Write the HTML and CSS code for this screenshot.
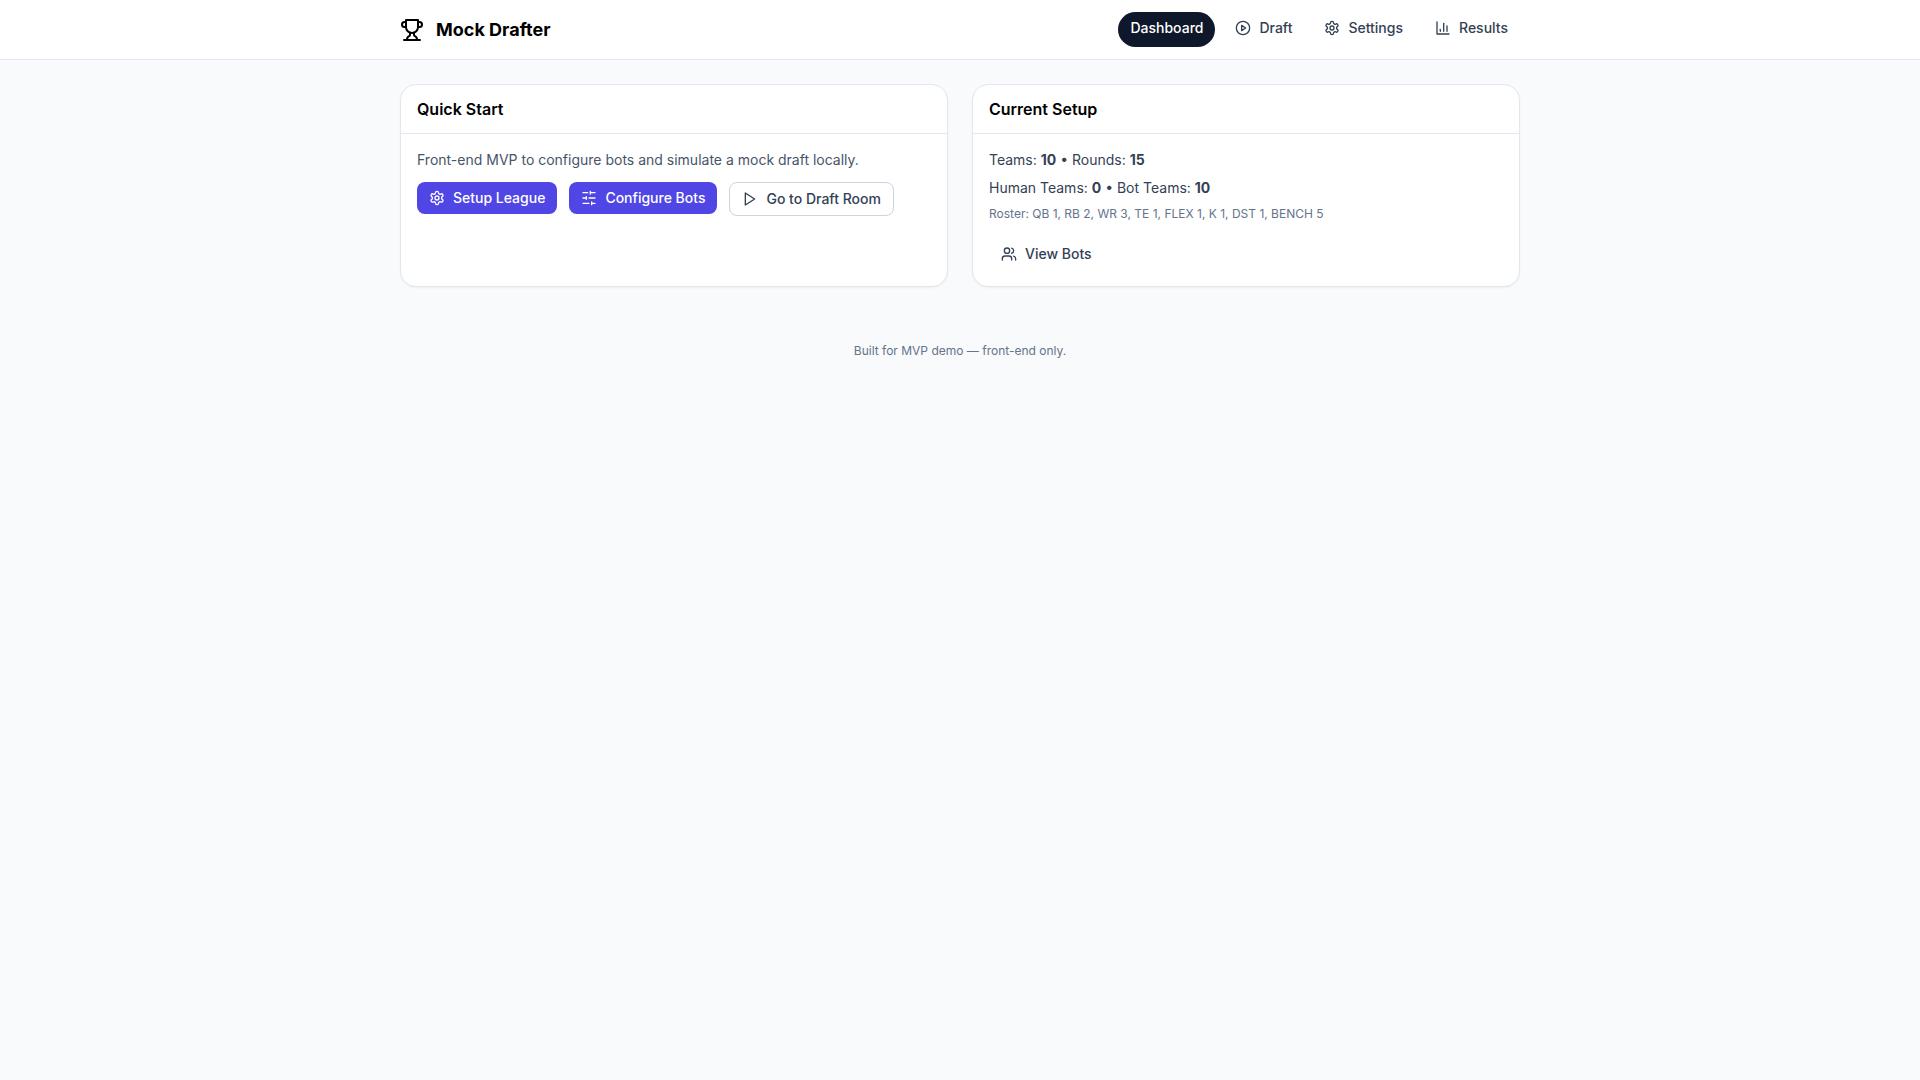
FILE: index.html
```html
<!DOCTYPE html>
<html lang="en">
<head>
<meta charset="utf-8">
<meta name="viewport" content="width=device-width, initial-scale=1">
<title>Mock Drafter</title>
<link rel="stylesheet" href="styles.css">
</head>
<body>
<svg class="sprite" aria-hidden="true">
  <symbol id="settings" viewBox="0 0 24 24">
    <path d="M12.22 2h-.44a2 2 0 0 0-2 2v.18a2 2 0 0 1-1 1.73l-.43.25a2 2 0 0 1-2 0l-.15-.08a2 2 0 0 0-2.73.73l-.22.38a2 2 0 0 0 .73 2.73l.15.1a2 2 0 0 1 1 1.72v.51a2 2 0 0 1-1 1.74l-.15.09a2 2 0 0 0-.73 2.73l.22.38a2 2 0 0 0 2.73.73l.15-.08a2 2 0 0 1 2 0l.43.25a2 2 0 0 1 1 1.73V20a2 2 0 0 0 2 2h.44a2 2 0 0 0 2-2v-.18a2 2 0 0 1 1-1.73l.43-.25a2 2 0 0 1 2 0l.15.08a2 2 0 0 0 2.73-.73l.22-.39a2 2 0 0 0-.73-2.73l-.15-.08a2 2 0 0 1-1-1.74v-.5a2 2 0 0 1 1-1.74l.15-.09a2 2 0 0 0 .73-2.73l-.22-.38a2 2 0 0 0-2.73-.73l-.15.08a2 2 0 0 1-2 0l-.43-.25a2 2 0 0 1-1-1.73V4a2 2 0 0 0-2-2z"/>
    <circle cx="12" cy="12" r="3"/>
  </symbol>
</svg>
<header class="topbar">
  <div class="container topbar-row">
    <div class="brand">
      <svg class="icon icon-lg" viewBox="0 0 24 24" aria-hidden="true"><path d="M6 9H4.5a2.500 2.500 0 0 1 0-5H6"/><path d="M18 9h1.500a2.500 2.500 0 0 0 0-5H18"/><path d="M4 22h16"/><path d="M10 14.660V17c0 .55-.47.98-.97 1.210C7.850 18.750 7 20.240 7 22"/><path d="M14 14.660V17c0 .55.47.98.97 1.210C16.150 18.750 17 20.240 17 22"/><path d="M18 2H6v7a6 6 0 0 0 12 0V2Z"/></svg>
      <span class="brand-name">Mock Drafter</span>
    </div>
    <nav class="nav" aria-label="Main">
      <a class="nav-link active" href="#dashboard" aria-current="page">Dashboard</a>
      <a class="nav-link" href="#draft"><svg class="icon" viewBox="0 0 24 24" aria-hidden="true"><circle cx="12" cy="12" r="10"/><polygon points="10 8 16 12 10 16 10 8"/></svg>Draft</a>
      <a class="nav-link" href="#settings"><svg class="icon" aria-hidden="true"><use href="#settings"/></svg>Settings</a>
      <a class="nav-link" href="#results"><svg class="icon" viewBox="0 0 24 24" aria-hidden="true"><path d="M3 3v18h18"/><path d="M18 17V9"/><path d="M13 17V5"/><path d="M8 17v-3"/></svg>Results</a>
    </nav>
  </div>
</header>
<main class="container cards">
  <section class="card">
    <h2 class="card-title">Quick Start</h2>
    <div class="card-body">
      <p class="intro">Front-end MVP to configure bots and simulate a mock draft locally.</p>
      <div class="actions">
        <button class="btn primary" type="button"><svg class="icon" aria-hidden="true"><use href="#settings"/></svg>Setup League</button>
        <button class="btn primary" type="button"><svg class="icon" viewBox="0 0 24 24" aria-hidden="true"><path d="M21 4h-7M10 4H3M21 12h-9M8 12H3M21 20h-5M12 20H3M14 2v4M8 10v4M16 18v4"/></svg>Configure Bots</button>
        <button class="btn outline" type="button"><svg class="icon" viewBox="0 0 24 24" aria-hidden="true"><polygon points="5 3 19 12 5 21 5 3"/></svg>Go to Draft Room</button>
      </div>
    </div>
  </section>
  <section class="card">
    <h2 class="card-title">Current Setup</h2>
    <div class="card-body">
      <p class="fact">Teams: <b>10</b> • Rounds: <b>15</b></p>
      <p class="fact">Human Teams: <b>0</b> • Bot Teams: <b>10</b></p>
      <p class="roster">Roster: QB 1, RB 2, WR 3, TE 1, FLEX 1, K 1, DST 1, BENCH 5</p>
      <div class="more">
        <button class="btn" type="button"><svg class="icon" viewBox="0 0 24 24" aria-hidden="true"><path d="M16 21v-2a4 4 0 0 0-4-4H6a4 4 0 0 0-4 4v2"/><circle cx="9" cy="7" r="4"/><path d="M22 21v-2a4 4 0 0 0-3-3.870"/><path d="M16 3.130a4 4 0 0 1 0 7.750"/></svg>View Bots</button>
      </div>
    </div>
  </section>
</main>
<footer class="footer">Built for MVP demo — front-end only.</footer>
</body>
</html>
```

FILE: styles.css
```css
* { box-sizing: border-box; }

body {
  margin: 0;
  min-height: 100vh;
  background: #f8fafc;
  color: #000;
  font-family: Inter, "Liberation Sans", sans-serif;
  font-size: 14px;
  line-height: 20px;
}

h2, p { margin: 0; }

.sprite { display: none; }

.icon {
  width: 16px;
  height: 16px;
  flex: none;
  fill: none;
  stroke: currentColor;
  stroke-width: 2;
  stroke-linecap: round;
  stroke-linejoin: round;
}

.icon-lg { width: 24px; height: 24px; }

.container {
  width: 100%;
  max-width: 1152px;
  margin: 0 auto;
  padding: 0 16px;
}

.topbar {
  background: #fff;
  border-bottom: 1px solid #e2e8f0;
}

.topbar-row {
  display: flex;
  flex-wrap: wrap;
  align-items: center;
  justify-content: space-between;
  gap: 12px;
  padding-top: 12px;
  padding-bottom: 12px;
}

.brand { display: flex; align-items: center; gap: 12px; }

.brand-name { font-size: 18px; line-height: 28px; font-weight: 700; }

.nav { display: flex; flex-wrap: wrap; gap: 8px; }

.nav-link {
  display: flex;
  align-items: center;
  gap: 8px;
  padding: 6px 12px 9px;
  border-radius: 18px;
  color: #334155;
  font-weight: 500;
  text-decoration: none;
}

.nav-link.active { background: #0f172a; color: #fff; }

.cards {
  display: grid;
  grid-template-columns: repeat(auto-fit, minmax(min(100%, 420px), 1fr));
  gap: 24px;
  padding-top: 24px;
  padding-bottom: 24px;
}

.card {
  background: #fff;
  border: 1px solid #e2e8f0;
  border-radius: 16px;
  box-shadow: 0 1px 2px rgba(0, 0, 0, 0.05);
}

.card-title {
  padding: 12px 16px;
  border-bottom: 1px solid #e2e8f0;
  font-size: 16px;
  line-height: 24px;
  font-weight: 600;
}

.card-body { padding: 16px; color: #334155; }

.intro { margin-bottom: 12px; color: #475569; }

.actions {
  display: flex;
  flex-wrap: wrap;
  align-items: flex-start;
  gap: 12px;
}

.btn {
  display: inline-flex;
  align-items: center;
  gap: 8px;
  padding: 6px 12px;
  border: 0;
  border-radius: 8px;
  background: none;
  color: #334155;
  font: inherit;
  font-weight: 500;
  cursor: pointer;
}

.primary { background: #4f46e5; color: #fff; }

.outline { background: #fff; border: 1px solid #cbd5e1; }

.fact { margin-bottom: 8px; }

.roster { color: #64748b; font-size: 12px; line-height: 16px; }

.more { display: flex; margin-top: 16px; }

.footer {
  padding: 32px 16px;
  color: #64748b;
  font-size: 12px;
  line-height: 16px;
  text-align: center;
}
```
